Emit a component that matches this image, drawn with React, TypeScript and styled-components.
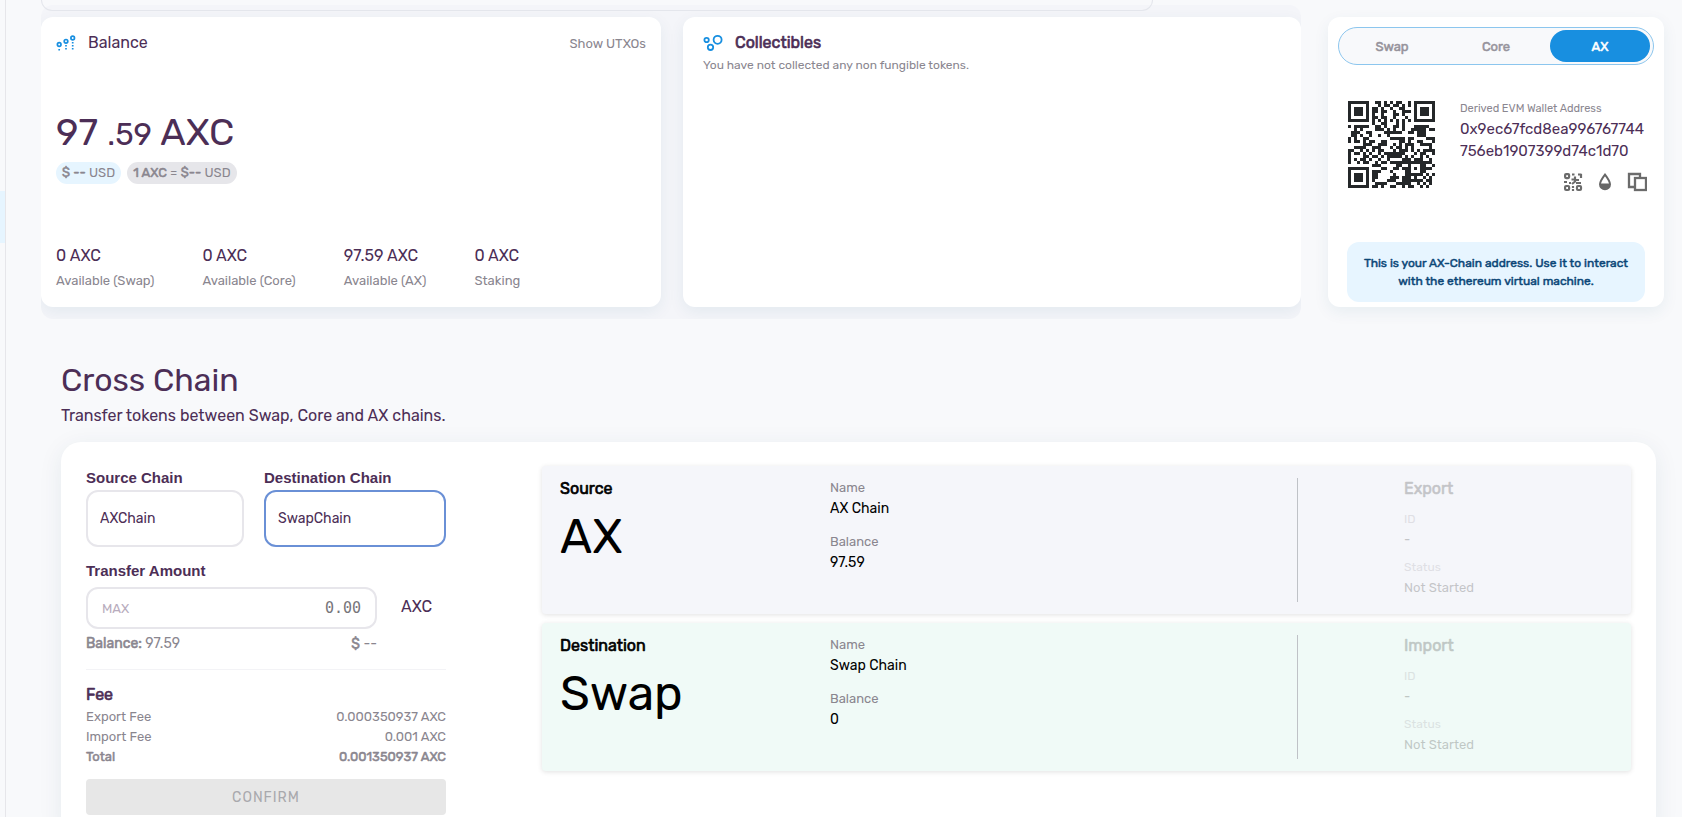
import React from "react";
import styled, { createGlobalStyle, css } from "styled-components";

const sans = `Rubik, Roboto, "Liberation Sans", sans-serif`;
const plum = "#4c2e56";
const grey = "#8a868f";
const blue = "#188fe0";

/* The regular face thickened in place, so bold text keeps the regular widths. */
const heavy = css`
  font-weight: 400;
  -webkit-text-stroke: 0.04em currentColor;
`;

const GlobalStyle = createGlobalStyle`
  * { box-sizing: border-box; }
  body {
    margin: 0;
    background: #f8f9fb;
    color: ${plum};
    font-family: ${sans};
    font-size: 16px;
  }
  h2, h3, h4, p, dl, dd, dt { margin: 0; font-weight: 400; }
  b { ${heavy} }
  button { font-family: inherit; border: 0; padding: 0; background: none; cursor: pointer; }
`;

/* ---------- QR code: version 3, error correction M, mask 2 ---------- */

const QR_SIZE = 29;
const DATA_WORDS = 44;
const EC_WORDS = 26;

function encodeSegments(text: string): number[] {
  const bits: number[] = [];
  const put = (value: number, length: number) => {
    for (let i = length - 1; i >= 0; i--) bits.push((value >> i) & 1);
  };
  for (const part of text.match(/\d{7,}|(?:(?!\d{7,}).)+/g) ?? []) {
    if (/^\d{7,}$/.test(part)) {
      put(1, 4);
      put(part.length, 10);
      for (let i = 0; i < part.length; i += 3) {
        const group = part.slice(i, i + 3);
        put(Number(group), group.length * 3 + 1);
      }
    } else {
      put(4, 4);
      put(part.length, 8);
      for (const c of part) put(c.charCodeAt(0), 8);
    }
  }
  put(0, Math.min(4, DATA_WORDS * 8 - bits.length));
  while (bits.length % 8) bits.push(0);
  const words: number[] = [];
  for (let i = 0; i < bits.length; i += 8) {
    words.push(parseInt(bits.slice(i, i + 8).join(""), 2));
  }
  for (let pad = 0xec; words.length < DATA_WORDS; pad ^= 0xec ^ 0x11) words.push(pad);
  return words;
}

function multiply(a: number, b: number): number {
  let r = 0;
  for (let i = 7; i >= 0; i--) {
    r = (r << 1) ^ ((r >> 7) * 0x11d);
    r ^= ((b >> i) & 1) * a;
  }
  return r;
}

function errorWords(data: number[]): number[] {
  const divisor = new Array(EC_WORDS).fill(0);
  divisor[EC_WORDS - 1] = 1;
  let root = 1;
  for (let i = 0; i < EC_WORDS; i++) {
    for (let j = 0; j < EC_WORDS; j++) {
      divisor[j] = multiply(divisor[j], root) ^ (divisor[j + 1] ?? 0);
    }
    root = multiply(root, 2);
  }
  const rest = new Array(EC_WORDS).fill(0);
  for (const word of data) {
    const factor = word ^ rest.shift();
    rest.push(0);
    divisor.forEach((d, i) => (rest[i] ^= multiply(d, factor)));
  }
  return rest;
}

function qrPath(text: string): string {
  const grid: (number | null)[][] = Array.from({ length: QR_SIZE }, () =>
    new Array(QR_SIZE).fill(null),
  );
  const finder = (row: number, col: number) => {
    for (let y = -4; y <= 4; y++) {
      for (let x = -4; x <= 4; x++) {
        const ring = Math.max(Math.abs(x), Math.abs(y));
        if (grid[row + y] && grid[row + y][col + x] !== undefined) {
          grid[row + y][col + x] = ring === 2 || ring === 4 ? 0 : 1;
        }
      }
    }
  };
  for (let i = 0; i < QR_SIZE; i++) grid[6][i] = grid[i][6] = (i + 1) % 2;
  finder(3, 3);
  finder(3, QR_SIZE - 4);
  finder(QR_SIZE - 4, 3);
  for (let y = -2; y <= 2; y++) {
    for (let x = -2; x <= 2; x++) {
      grid[22 + y][22 + x] = Math.max(Math.abs(x), Math.abs(y)) === 1 ? 0 : 1;
    }
  }
  const format = "101111001111100".split("").map(Number);
  const top = [[8, 0], [8, 1], [8, 2], [8, 3], [8, 4], [8, 5], [8, 7], [8, 8], [7, 8], [5, 8], [4, 8], [3, 8], [2, 8], [1, 8], [0, 8]];
  format.forEach((bit, i) => {
    grid[top[i][0]][top[i][1]] = bit;
    if (i < 7) grid[QR_SIZE - 1 - i][8] = bit;
    else grid[8][QR_SIZE - 15 + i] = bit;
  });
  grid[QR_SIZE - 8][8] = 1;

  const data = encodeSegments(text);
  const bits = [...data, ...errorWords(data)].flatMap((w) =>
    [7, 6, 5, 4, 3, 2, 1, 0].map((i) => (w >> i) & 1),
  );
  let next = 0;
  let up = true;
  for (let right = QR_SIZE - 1; right > 0; right -= 2) {
    if (right === 6) right = 5;
    for (let step = 0; step < QR_SIZE; step++) {
      const row = up ? QR_SIZE - 1 - step : step;
      for (const col of [right, right - 1]) {
        if (grid[row][col] === null) {
          grid[row][col] = (bits[next++] ?? 0) ^ (col % 3 === 0 ? 1 : 0);
        }
      }
    }
    up = !up;
  }
  return grid
    .flatMap((line, y) => line.map((dark, x) => (dark ? `M${x} ${y}h1v1h-1z` : "")))
    .join("");
}

/* ---------- Frame ---------- */

const Page = styled.div`
  display: flex;
  height: 100vh;
  overflow: hidden;
`;

const Sidebar = styled.nav`
  flex: none;
  width: 6px;
  padding-top: 191px;
  border-right: 1px solid #e6e6ea;
`;

const ActiveItem = styled.div`
  height: 52px;
  background: #e6f5ff;
`;

const Main = styled.main`
  flex: 1;
  min-width: 0;
  padding: 0 18px 0 35px;
`;

const UpperPanel = styled.div`
  position: relative;
  z-index: 1;
  width: 68.5%;
  height: 11px;
  margin-bottom: -6px;
  border: 1px solid #e4e6ec;
  border-top: 0;
  border-radius: 0 0 12px 12px;
`;

const TopRow = styled.div`
  display: grid;
  grid-template-columns: minmax(0, 1fr) 336px;
  gap: 27px;
`;

const WalletArea = styled.div`
  display: grid;
  grid-template-columns: 620fr 618fr;
  gap: 22px;
  padding: 12px 0;
  overflow: hidden;
  border-radius: 12px;
  background: #f4f5f9;
`;

const Card = styled.section<{ $inset: string }>`
  display: flex;
  flex-direction: column;
  min-height: 290px;
  padding: ${(p) => p.$inset};
  border-radius: 12px;
  background: #fff;
  box-shadow: 0 5px 16px rgba(20, 80, 120, 0.07);
`;

const CardHeader = styled.header`
  display: flex;
  align-items: center;
  height: 24px;
`;

const CardTitle = styled.h3<{ $strong?: boolean }>`
  flex: 1;
  margin-left: 12px;
  font-size: 16px;
  line-height: 24px;
  ${(p) => p.$strong && heavy}
`;

const TextButton = styled.button`
  color: ${grey};
  font-size: 13px;
`;

/* ---------- Balance ---------- */

const Amount = styled.p`
  margin-top: 53px;
  font-size: 38px;
  line-height: 48px;

  small { font-size: 31px; }
`;

const Badges = styled.div`
  display: flex;
  gap: 6px;
  margin-top: 3px;
`;

const Badge = styled.span<{ $tint: string }>`
  padding: 0 6px;
  border-radius: 11px;
  background: ${(p) => p.$tint};
  color: ${grey};
  font-size: 13px;
  line-height: 22px;
`;

const Stats = styled.dl`
  display: flex;
  gap: 48px;
  margin-top: auto;
`;

const Stat = styled.div`
  display: flex;
  flex-direction: column-reverse;

  dt { color: ${grey}; font-size: 13px; line-height: 24px; }
  dd { font-size: 16px; line-height: 26px; }
`;

const EmptyNote = styled.p`
  color: ${grey};
  font-size: 12px;
  line-height: 20px;
`;

/* ---------- Address ---------- */

const AddressCard = styled(Card)`
  margin: 12px 0;
`;

const Tabs = styled.div`
  display: grid;
  grid-template-columns: repeat(3, 1fr);
  height: 38px;
  padding: 2px 1px;
  border: 1px solid #8cc6ee;
  border-radius: 19px;
  background: #f8f9fb;
`;

const Tab = styled.button<{ $active?: boolean }>`
  margin: 0 2px;
  border-radius: 16px;
  background: ${(p) => (p.$active ? blue : "transparent")};
  color: ${(p) => (p.$active ? "#fff" : "#96939b")};
  font-size: 13px;
  ${heavy}
`;

const AddressRow = styled.div`
  display: flex;
  gap: 25px;
  padding: 36px 7px 0 10px;
`;

const AddressText = styled.div`
  flex: 1;
  min-width: 0;
`;

const AddressLabel = styled.p`
  color: ${grey};
  font-size: 11px;
  line-height: 16px;
`;

const AddressValue = styled.p`
  margin: 1px 0 10px;
  font-size: 15px;
  line-height: 22px;
  word-break: break-all;
`;

const Actions = styled.div`
  display: flex;
  justify-content: flex-end;
  gap: 14px;

  button { height: 20px; line-height: 0; }
`;

const Notice = styled.p`
  margin: auto 9px 0;
  padding: 12px;
  border-radius: 12px;
  background: #e7f5ff;
  color: #0b4677;
  font-size: 12px;
  line-height: 18px;
  text-align: center;
  ${heavy}
`;

/* ---------- Cross chain ---------- */

const CrossChain = styled.section`
  padding: 41px 8px 0 20px;
`;

const PageTitle = styled.h2`
  font-size: 32px;
  line-height: 40px;
`;

const Subtitle = styled.p`
  margin: 4px 0 14px;
  font-size: 16px;
  line-height: 24px;
`;

const TransferCard = styled.div`
  display: grid;
  grid-template-columns: 360px minmax(0, 1fr);
  gap: 96px;
  padding: 24px 25px;
  border-radius: 20px;
  background: #fff;
  box-shadow: 0 5px 24px rgba(20, 60, 90, 0.08);
`;

const ChainFields = styled.div`
  display: grid;
  grid-template-columns: 158fr 182fr;
  gap: 20px;
`;

const Label = styled.label`
  display: block;
  font-family: "Liberation Sans", Arial, sans-serif;
  font-size: 15px;
  font-weight: 700;
  line-height: 24px;
`;

const ChainSelect = styled.select<{ $focused?: boolean }>`
  appearance: none;
  display: block;
  width: 100%;
  height: 57px;
  padding: 0 12px;
  border: 2px solid ${(p) => (p.$focused ? "#6a90d6" : "#e7e6eb")};
  border-radius: 12px;
  background: #fff;
  color: ${plum};
  font-family: inherit;
  font-size: 14px;
`;

const AmountLabel = styled(Label)`
  margin: 12px 0 4px;
`;

const AmountRow = styled.div`
  display: grid;
  grid-template-columns: 291px 1fr;
  column-gap: 24px;
`;

const AmountBox = styled.div`
  display: flex;
  height: 42px;
  padding: 0 14px;
  border: 2px solid #e7e6eb;
  border-radius: 12px;

  button { color: #b8acbd; font-size: 13px; }
  input {
    flex: 1;
    min-width: 0;
    padding: 0;
    border: 0;
    outline: 0;
    background: none;
    font-family: "DejaVu Sans Mono", monospace;
    font-size: 15px;
    text-align: right;
  }
  input::placeholder { color: #77757a; }
`;

const Unit = styled.span`
  line-height: 40px;
`;

const BalanceLine = styled.div`
  display: flex;
  justify-content: space-between;
  width: 291px;
  margin-top: 5px;
  color: ${grey};
  font-size: 14px;
  line-height: 20px;
`;

const Fees = styled.div`
  margin: 15px 0 12px;
  padding-top: 13px;
  border-top: 1px solid #f3f3f6;

  h4 { ${heavy} line-height: 24px; }
`;

const FeeLine = styled.div<{ $total?: boolean }>`
  display: flex;
  justify-content: space-between;
  color: ${grey};
  font-size: 13px;
  line-height: 20px;
  ${(p) => p.$total && heavy}
`;

const ConfirmButton = styled.button`
  width: 100%;
  height: 36px;
  border-radius: 4px;
  background: #e7e7e7;
  color: #a9a9ad;
  font-size: 14px;
  letter-spacing: 1px;
`;

const Chains = styled.div`
  display: flex;
  flex-direction: column;
  gap: 9px;
`;

const ChainPanel = styled.article<{ $tint: string }>`
  display: grid;
  grid-template-columns: 270fr 467fr 316fr;
  min-height: 148px;
  padding: 12px 18px;
  border-radius: 4px;
  background: ${(p) => p.$tint};
  box-shadow: 0 1px 5px rgba(0, 0, 0, 0.12);
  color: #000;
`;

const PanelTitle = styled.h4`
  font-size: 16px;
  line-height: 22px;
  ${heavy}
`;

const ChainCode = styled.p`
  margin-top: 8px;
  font-size: 48px;
  line-height: 58px;
`;

const Details = styled.dl<{ $small?: boolean }>`
  dt {
    color: ${grey};
    font-size: ${(p) => (p.$small ? 12 : 13)}px;
    line-height: 20px;
  }
  dd {
    margin-bottom: ${(p) => (p.$small ? 6 : 12)}px;
    font-size: ${(p) => (p.$small ? 13 : 14)}px;
    line-height: 22px;
  }
  dd:last-child { margin-bottom: 0; }
`;

const Progress = styled.div`
  padding-left: 106px;
  border-left: 1px solid #bfc2c7;

  > div { opacity: 0.2; }
  ${Details} { margin-top: 9px; }
`;

/* ---------- Icons ---------- */

const BalanceIcon = () => (
  <svg width="20" height="18" viewBox="0 0 20 18" fill="none" stroke={blue} strokeWidth="1.7">
    <circle cx="3.2" cy="10.5" r="1.8" />
    <circle cx="10" cy="7.3" r="1.8" />
    <circle cx="16.7" cy="4" r="1.8" />
    <path d="M3.2 15v2M10 11v6M16.7 8v9" strokeDasharray="1.6 1.4" />
  </svg>
);

const CollectiblesIcon = () => (
  <svg width="20" height="18" viewBox="0 0 20 18" fill="none" stroke={blue} strokeWidth="1.8">
    <circle cx="3.6" cy="6" r="2.2" />
    <circle cx="14.6" cy="5.8" r="4" />
    <circle cx="7.5" cy="13.3" r="2.7" />
  </svg>
);

const QrIcon = () => (
  <svg width="20" height="20" viewBox="0 0 20 20" fill="none" stroke="#6b6b6b" strokeWidth="2.2">
    <rect x="2.1" y="2.1" width="4" height="4" rx="1" />
    <rect x="2.1" y="14" width="4" height="4" rx="1" />
    <rect x="14" y="14" width="4" height="4" rx="1" />
    <path d="M9 2.5h2.500M15 2.500h3.500M18 2v4M12 4.500v5l-3 2.500M8.500 7.500h3M13 8h3M1 10h3M6 11h2M13 11h5M10 14v2M10 17v2" />
  </svg>
);

const DropIcon = () => (
  <svg width="16" height="20" viewBox="0 0 16 20">
    <path d="M8 2.6C5 6.5 3 9.3 3 12.3a5 5 0 0 0 10 0C13 9.3 11 6.5 8 2.6z" fill="none" stroke="#666" strokeWidth="2" />
    <path d="M3 11.5h10a5 5.600 0 0 1-10 0z" fill="#666" />
  </svg>
);

const CopyIcon = () => (
  <svg width="20" height="20" viewBox="0 0 20 20" fill="none" stroke="#6b6b6b" strokeWidth="2.3">
    <path d="M7 15H2V2h11v3" />
    <rect x="8" y="6" width="11" height="12" />
  </svg>
);

/* ---------- Content ---------- */

const ADDRESS = "0x9ec67fcd8ea996767744756eb1907399d74c1d70";

const STATS = [
  ["0 AXC", "Available (Swap)"],
  ["0 AXC", "Available (Core)"],
  ["97.59 AXC", "Available (AX)"],
  ["0 AXC", "Staking"],
];

const PANELS = [
  { role: "Source", code: "AX", name: "AX Chain", balance: "97.59", step: "Export", tint: "#f5f6fa" },
  { role: "Destination", code: "Swap", name: "Swap Chain", balance: "0", step: "Import", tint: "#f0faf7" },
];

export default function App() {
  return (
    <>
      <GlobalStyle />
      <Page>
        <Sidebar>
          <ActiveItem />
        </Sidebar>
        <Main>
          <UpperPanel />
          <TopRow>
            <WalletArea>
              <Card $inset="14px 15px">
                <CardHeader>
                  <BalanceIcon />
                  <CardTitle>Balance</CardTitle>
                  <TextButton>Show UTXOs</TextButton>
                </CardHeader>
                <Amount>
                  97 <small>.59</small> AXC
                </Amount>
                <Badges>
                  <Badge $tint="#e6f5ff">
                    <b>$ --</b> USD
                  </Badge>
                  <Badge $tint="#e6e6ea">
                    <b>1 AXC</b> = <b>$--</b> USD
                  </Badge>
                </Badges>
                <Stats>
                  {STATS.map(([value, label]) => (
                    <Stat key={label}>
                      <dt>{label}</dt>
                      <dd>{value}</dd>
                    </Stat>
                  ))}
                </Stats>
              </Card>
              <Card $inset="14px 20px">
                <CardHeader>
                  <CollectiblesIcon />
                  <CardTitle $strong>Collectibles</CardTitle>
                </CardHeader>
                <EmptyNote>You have not collected any non fungible tokens.</EmptyNote>
              </Card>
            </WalletArea>
            <AddressCard $inset="10px 10px 5px">
              <Tabs>
                <Tab>Swap</Tab>
                <Tab>Core</Tab>
                <Tab $active>AX</Tab>
              </Tabs>
              <AddressRow>
                <svg width="87" height="87" viewBox="0 0 29 29" shapeRendering="crispEdges" role="img" aria-label="Address QR code">
                  <path d={qrPath(ADDRESS)} fill="#242729" />
                </svg>
                <AddressText>
                  <AddressLabel>Derived EVM Wallet Address</AddressLabel>
                  <AddressValue>{ADDRESS}</AddressValue>
                  <Actions>
                    <button aria-label="Show QR code"><QrIcon /></button>
                    <button aria-label="Faucet"><DropIcon /></button>
                    <button aria-label="Copy address"><CopyIcon /></button>
                  </Actions>
                </AddressText>
              </AddressRow>
              <Notice>
                This is your AX-Chain address. Use it to interact with the ethereum virtual machine.
              </Notice>
            </AddressCard>
          </TopRow>

          <CrossChain>
            <PageTitle>Cross Chain</PageTitle>
            <Subtitle>Transfer tokens between Swap, Core and AX chains.</Subtitle>
            <TransferCard>
              <form onSubmit={(e) => e.preventDefault()}>
                <ChainFields>
                  <div>
                    <Label htmlFor="source">Source Chain</Label>
                    <ChainSelect id="source" defaultValue="AXChain">
                      <option>AXChain</option>
                    </ChainSelect>
                  </div>
                  <div>
                    <Label htmlFor="destination">Destination Chain</Label>
                    <ChainSelect id="destination" defaultValue="SwapChain" $focused>
                      <option>SwapChain</option>
                    </ChainSelect>
                  </div>
                </ChainFields>
                <AmountLabel htmlFor="amount">Transfer Amount</AmountLabel>
                <AmountRow>
                  <AmountBox>
                    <button type="button">MAX</button>
                    <input id="amount" placeholder="0.00" />
                  </AmountBox>
                  <Unit>AXC</Unit>
                </AmountRow>
                <BalanceLine>
                  <span><b>Balance:</b> 97.59</span>
                  <span><b>$</b> --</span>
                </BalanceLine>
                <Fees>
                  <h4>Fee</h4>
                  <dl>
                    <FeeLine><dt>Export Fee</dt><dd>0.000350937 AXC</dd></FeeLine>
                    <FeeLine><dt>Import Fee</dt><dd>0.001 AXC</dd></FeeLine>
                    <FeeLine $total><dt>Total</dt><dd>0.001350937 AXC</dd></FeeLine>
                  </dl>
                </Fees>
                <ConfirmButton disabled>CONFIRM</ConfirmButton>
              </form>
              <Chains>
                {PANELS.map((p) => (
                  <ChainPanel key={p.role} $tint={p.tint}>
                    <div>
                      <PanelTitle>{p.role}</PanelTitle>
                      <ChainCode>{p.code}</ChainCode>
                    </div>
                    <Details>
                      <dt>Name</dt>
                      <dd>{p.name}</dd>
                      <dt>Balance</dt>
                      <dd>{p.balance}</dd>
                    </Details>
                    <Progress>
                      <div>
                        <PanelTitle>{p.step}</PanelTitle>
                        <Details $small>
                          <dt>ID</dt>
                          <dd>-</dd>
                          <dt>Status</dt>
                          <dd>Not Started</dd>
                        </Details>
                      </div>
                    </Progress>
                  </ChainPanel>
                ))}
              </Chains>
            </TransferCard>
          </CrossChain>
        </Main>
      </Page>
    </>
  );
}
